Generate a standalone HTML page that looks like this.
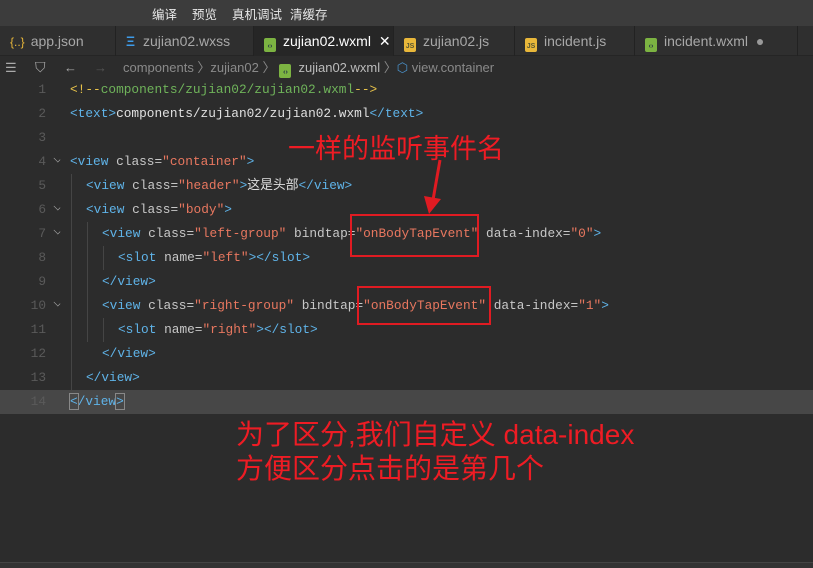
<!DOCTYPE html>
<html><head><meta charset="utf-8"><style>
*{margin:0;padding:0;box-sizing:border-box}
body{width:813px;height:568px;background:#2c2c2c;overflow:hidden;position:relative;font-family:"Liberation Sans","Noto Sans CJK SC",sans-serif}
.top{position:absolute;left:0;top:0;width:813px;height:26px;background:#3c3c3c;color:#e8e8e8;font-size:12.5px}
.top span{position:absolute;top:4px}
.tabs{position:absolute;top:26px;left:0;width:813px;height:30px;background:#2f2f2f;border-bottom:1px solid #252525}
.tab{position:absolute;top:0;height:30px;border-right:1px solid #222;color:#a8a8a8;font-size:14px;line-height:30px;padding-left:10px}
.tab.active{background:#262626;color:#fff}
.ic{display:inline-block;width:12px;height:14px;vertical-align:-2px;margin-right:7px;border-radius:2px;font-size:7px;line-height:18px;text-align:center;font-weight:bold}
.bc{position:absolute;top:56px;left:0;width:813px;height:23px;background:#2c2c2c;color:#8a8a8a;font-size:13px;line-height:23px}
.code{position:absolute;left:0;top:78px;width:813px;font-family:"Liberation Mono","Noto Sans CJK SC",monospace;font-size:12.8px}
.ln{position:absolute;left:0;width:46px;text-align:right;color:#5a5a5a;height:24px;line-height:24px}
.l{position:absolute;height:24px;line-height:24px;white-space:pre;color:#d4d4d4}
.t{color:#5fb3e8}.a{color:#c8c8c8}.s{color:#e8775f}.c{color:#6fb35a}.y{color:#e8c34a}.w{color:#e0e0e0}
.g{position:absolute;width:1px;background:#454545}
.fold{position:absolute;left:52px;width:10px;height:6px;border-right:1.5px solid #aaa;border-bottom:1.5px solid #aaa;transform:rotate(45deg) scale(.6)}
.red{position:absolute;color:#ee1c24;font-family:"Liberation Sans","Noto Sans CJK SC",sans-serif;white-space:nowrap}
.box{position:absolute;border:2px solid #e01b22}
</style></head><body>
<div class="top"><span style="left:152px">编译</span><span style="left:192px">预览</span><span style="left:232px">真机调试</span><span style="left:290px">清缓存</span></div>
<div class="tabs">
<div class="tab" style="left:0;width:116px"><span style="color:#e8b73a;font-size:12px;margin-right:6px">{..}</span>app.json</div>
<div class="tab" style="left:116px;width:138px"><span style="color:#3d9be9;font-weight:bold;margin-right:8px">Ξ</span>zujian02.wxss</div>
<div class="tab active" style="left:254px;width:140px"><span class="ic" style="background:#7cb342;color:#234">‹›</span>zujian02.wxml <span style="margin-left:4px">✕</span></div>
<div class="tab" style="left:394px;width:121px"><span class="ic" style="background:#e8b73a;color:#553">JS</span>zujian02.js</div>
<div class="tab" style="left:515px;width:120px"><span class="ic" style="background:#e8b73a;color:#553">JS</span>incident.js</div>
<div class="tab" style="left:635px;width:163px"><span class="ic" style="background:#7cb342;color:#234">‹›</span>incident.wxml <span style="color:#999;margin-left:4px">●</span></div>
</div>
<div class="bc"><span style="position:absolute;left:5px;color:#aaa">☰</span><span style="position:absolute;left:35px;color:#aaa;font-size:14px">⛉</span><span style="position:absolute;left:64px;color:#aaa">←</span><span style="position:absolute;left:94px;color:#555">→</span><span style="position:absolute;left:123px">components 〉zujian02 〉<span class="ic" style="background:#7cb342;color:#234;margin-left:4px">‹›</span><span style="color:#bbb">zujian02.wxml</span> 〉<span style="color:#4a90c8">⬡</span> view.container</span></div>
<div style="position:absolute;left:0;top:390px;width:813px;height:24px;background:#474747"></div>
<div class="code">
<div class="ln" style="top:0">1</div><div class="ln" style="top:24px">2</div><div class="ln" style="top:48px">3</div><div class="ln" style="top:72px">4</div><div class="ln" style="top:96px">5</div><div class="ln" style="top:120px">6</div><div class="ln" style="top:144px">7</div><div class="ln" style="top:168px">8</div><div class="ln" style="top:192px">9</div><div class="ln" style="top:216px">10</div><div class="ln" style="top:240px">11</div><div class="ln" style="top:264px">12</div><div class="ln" style="top:288px">13</div><div class="ln" style="top:312px">14</div>
<div class="fold" style="top:78px"></div><div class="fold" style="top:126px"></div><div class="fold" style="top:150px"></div><div class="fold" style="top:222px"></div>
<div class="g" style="left:71px;top:96px;height:216px"></div>
<div class="g" style="left:87px;top:144px;height:120px"></div>
<div class="g" style="left:103px;top:168px;height:24px"></div>
<div class="g" style="left:103px;top:240px;height:24px"></div>
<div class="l" style="top:0;left:70px"><span class="y">&lt;!--</span><span class="c">components/zujian02/zujian02.wxml</span><span class="y">--&gt;</span></div>
<div class="l" style="top:24px;left:70px"><span class="t">&lt;text&gt;</span><span class="w">components/zujian02/zujian02.wxml</span><span class="t">&lt;/text&gt;</span></div>
<div class="l" style="top:72px;left:70px"><span class="t">&lt;view</span> <span class="a">class=</span><span class="s">"container"</span><span class="t">&gt;</span></div>
<div class="l" style="top:96px;left:86px"><span class="t">&lt;view</span> <span class="a">class=</span><span class="s">"header"</span><span class="t">&gt;</span><span class="w">这是头部</span><span class="t">&lt;/view&gt;</span></div>
<div class="l" style="top:120px;left:86px"><span class="t">&lt;view</span> <span class="a">class=</span><span class="s">"body"</span><span class="t">&gt;</span></div>
<div class="l" style="top:144px;left:102px"><span class="t">&lt;view</span> <span class="a">class=</span><span class="s">"left-group"</span> <span class="a">bindtap=</span><span class="s">"onBodyTapEvent"</span> <span class="a">data-index=</span><span class="s">"0"</span><span class="t">&gt;</span></div>
<div class="l" style="top:168px;left:118px"><span class="t">&lt;slot</span> <span class="a">name=</span><span class="s">"left"</span><span class="t">&gt;&lt;/slot&gt;</span></div>
<div class="l" style="top:192px;left:102px"><span class="t">&lt;/view&gt;</span></div>
<div class="l" style="top:216px;left:102px"><span class="t">&lt;view</span> <span class="a">class=</span><span class="s">"right-group"</span> <span class="a">bindtap=</span><span class="s">"onBodyTapEvent"</span> <span class="a">data-index=</span><span class="s">"1"</span><span class="t">&gt;</span></div>
<div class="l" style="top:240px;left:118px"><span class="t">&lt;slot</span> <span class="a">name=</span><span class="s">"right"</span><span class="t">&gt;&lt;/slot&gt;</span></div>
<div class="l" style="top:264px;left:102px"><span class="t">&lt;/view&gt;</span></div>
<div class="l" style="top:288px;left:86px"><span class="t">&lt;/view&gt;</span></div>
<div class="l" style="top:312px;left:70px"><span class="t" style="outline:1px solid #888">&lt;</span><span class="t">/view</span><span class="t" style="outline:1px solid #888">&gt;</span></div>
</div>
<div class="red" style="left:288px;top:127px;font-size:27px">一样的监听事件名</div>
<svg style="position:absolute;left:0;top:0" width="813" height="568"><line x1="440" y1="160" x2="433" y2="200" stroke="#e01b22" stroke-width="3"/><polygon points="424,196 441,199 429,214" fill="#e01b22"/></svg>
<div class="box" style="left:350px;top:214px;width:129px;height:43px"></div>
<div class="box" style="left:357px;top:286px;width:134px;height:39px"></div>
<div class="red" style="left:236px;top:413px;font-size:28px">为了区分,我们自定义 data-index</div>
<div class="red" style="left:236px;top:447px;font-size:28px">方便区分点击的是第几个</div>
<div style="position:absolute;left:0;top:562px;width:813px;height:6px;background:#333;border-top:1px solid #444"></div>
</body></html>
